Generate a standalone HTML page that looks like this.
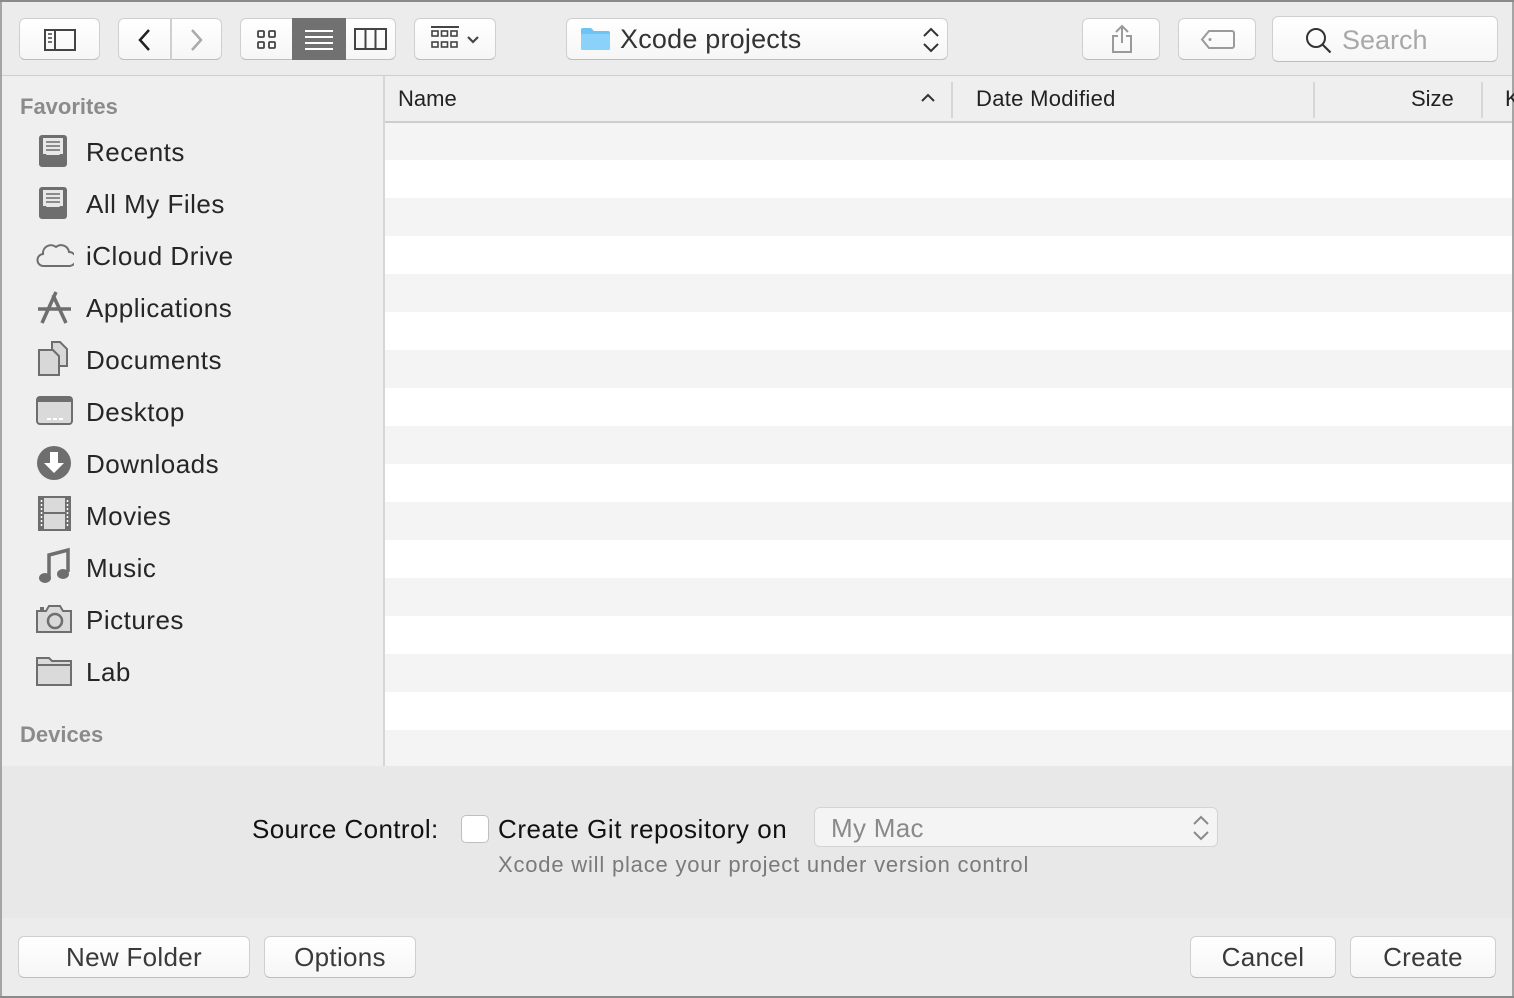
<!DOCTYPE html>
<html><head><meta charset="utf-8"><style>
*{margin:0;padding:0;box-sizing:border-box}
body{width:1514px;height:998px;overflow:hidden;background:#ececec;font-family:"Liberation Sans",sans-serif;position:relative}
.a{position:absolute}
.btn{position:absolute;background:linear-gradient(#fff,#f6f6f6);border:1px solid #cfcfcf;border-bottom-color:#bdbdbd;border-radius:6px}
.row{position:absolute;left:385px;width:1127px;height:38px}
.side{position:absolute;left:86px;font-size:26px;color:#262626;letter-spacing:0.5px}
.ic{position:absolute;left:36px}
.bl{font-size:26px;color:#3a3a3a;text-align:center;line-height:40px;letter-spacing:0.3px}
</style></head><body>
<div class="a" style="left:0;top:0;width:1514px;height:2px;background:#8a8a8a"></div>
<div class="a" style="left:0;top:2px;width:2px;height:996px;background:#a5a5a5"></div>
<div class="a" style="right:0;top:2px;width:2px;height:996px;background:#a5a5a5"></div>
<div class="a" style="left:0;top:996px;width:1514px;height:2px;background:#8a8a8a"></div>
<div class="a" style="left:2px;top:2px;width:1510px;height:73px;background:#ececec"></div>
<div class="a" style="left:2px;top:75px;width:1510px;height:1px;background:#cfcfcf"></div>
<div class="btn" style="left:19px;top:18px;width:81px;height:42px">
<svg class="a" style="left:24px;top:10px" width="32" height="22"><rect x="1" y="1" width="30" height="20" fill="none" stroke="#444" stroke-width="2"/><line x1="11" y1="1" x2="11" y2="21" stroke="#444" stroke-width="2"/><path d="M4 5h4M4 9h4M4 13h4" stroke="#444" stroke-width="1.5"/></svg></div>
<div class="btn" style="left:118px;top:18px;width:53px;height:42px;border-radius:6px 0 0 6px"><svg class="a" style="left:16px;top:8px" width="20" height="26"><path d="M14 3L5 13l9 10" fill="none" stroke="#222" stroke-width="2.5"/></svg></div>
<div class="btn" style="left:171px;top:18px;width:51px;height:42px;border-radius:0 6px 6px 0"><svg class="a" style="left:15px;top:8px" width="20" height="26"><path d="M5 3l9 10-9 10" fill="none" stroke="#aaa" stroke-width="2.5"/></svg></div>
<div class="btn" style="left:240px;top:18px;width:156px;height:42px"></div>
<svg class="a" style="left:256px;top:29px" width="22" height="22"><g fill="none" stroke="#444" stroke-width="1.8"><rect x="2" y="2" width="6" height="6" rx="1"/><rect x="13" y="2" width="6" height="6" rx="1"/><rect x="2" y="13" width="6" height="6" rx="1"/><rect x="13" y="13" width="6" height="6" rx="1"/></g></svg>
<div class="a" style="left:292px;top:18px;width:54px;height:42px;background:#717171"></div>
<svg class="a" style="left:304px;top:28px" width="30" height="22"><path d="M1 3h28M1 9h28M1 15h28M1 21h28" stroke="#fff" stroke-width="2"/></svg>
<svg class="a" style="left:354px;top:28px" width="34" height="22"><rect x="1" y="1" width="31" height="20" fill="none" stroke="#444" stroke-width="2"/><path d="M11.5 1v20M21.5 1v20" stroke="#444" stroke-width="2"/></svg>
<div class="btn" style="left:414px;top:18px;width:82px;height:42px"></div>
<svg class="a" style="left:430px;top:25px" width="56" height="28"><path d="M1 2h28" stroke="#444" stroke-width="2"/><g fill="none" stroke="#444" stroke-width="1.6"><rect x="2" y="6" width="6" height="5"/><rect x="11.5" y="6" width="6" height="5"/><rect x="21" y="6" width="6" height="5"/><rect x="2" y="17" width="6" height="5"/><rect x="11.5" y="17" width="6" height="5"/><rect x="21" y="17" width="6" height="5"/></g><path d="M38 12l5 5 5-5" fill="none" stroke="#444" stroke-width="2.2"/></svg>
<div class="btn" style="left:566px;top:18px;width:382px;height:42px"></div>
<svg class="a" style="left:580px;top:27px" width="31" height="24"><path d="M1 3a2 2 0 0 1 2-2h8l3 3h14a2 2 0 0 1 2 2v15a2 2 0 0 1-2 2H3a2 2 0 0 1-2-2z" fill="#6cc3f4"/><rect x="1" y="7" width="29" height="16" rx="1.5" fill="#8ad2fa"/></svg>
<div class="a" style="left:620px;top:24px;font-size:27px;color:#333;letter-spacing:0.2px">Xcode projects</div>
<svg class="a" style="left:921px;top:26px" width="20" height="28"><path d="M3 10l7-7 7 7M3 18l7 7 7-7" fill="none" stroke="#333" stroke-width="2"/></svg>
<div class="btn" style="left:1082px;top:18px;width:78px;height:42px"><svg class="a" style="left:27px;top:5px" width="24" height="30"><path d="M12 2v17M6 8l6-6 6 6M8 12H3v16h18V12h-5" fill="none" stroke="#9a9a9a" stroke-width="2"/></svg></div>
<div class="btn" style="left:1178px;top:18px;width:78px;height:42px"><svg class="a" style="left:21px;top:10px" width="36" height="22"><path d="M9 2h23a2 2 0 0 1 2 2v13a2 2 0 0 1-2 2H9L2 10.5z" fill="none" stroke="#9a9a9a" stroke-width="2"/><circle cx="10" cy="10.5" r="1.5" fill="#9a9a9a"/></svg></div>
<div class="btn" style="left:1272px;top:16px;width:226px;height:46px"><svg class="a" style="left:32px;top:10px" width="28" height="28"><circle cx="11" cy="11" r="9" fill="none" stroke="#333" stroke-width="2"/><path d="M17.5 17.5l8 8" stroke="#333" stroke-width="2.2"/></svg><div class="a" style="left:69px;top:8px;font-size:27px;color:#a8a8a8">Search</div></div>
<div class="a" style="left:2px;top:76px;width:381px;height:690px;background:#efefef"></div>
<div class="a" style="left:383px;top:76px;width:2px;height:690px;background:#d6d6d6"></div>
<div class="a" style="left:20px;top:94px;font-size:22px;color:#7a7a7a;font-weight:bold;opacity:.85">Favorites</div>
<div class="a" style="left:20px;top:722px;font-size:22px;color:#7a7a7a;font-weight:bold;opacity:.85">Devices</div>
<div class="side" style="top:137px">Recents</div>
<div class="side" style="top:189px">All My Files</div>
<div class="side" style="top:241px">iCloud Drive</div>
<div class="side" style="top:293px">Applications</div>
<div class="side" style="top:345px">Documents</div>
<div class="side" style="top:397px">Desktop</div>
<div class="side" style="top:449px">Downloads</div>
<div class="side" style="top:501px">Movies</div>
<div class="side" style="top:553px">Music</div>
<div class="side" style="top:605px">Pictures</div>
<div class="side" style="top:657px">Lab</div>
<svg class="ic" style="top:134px" width="38" height="34"><path d="M3 4a3 3 0 0 1 3-3h22a3 3 0 0 1 3 3v26H3z" fill="#6e6e6e"/><rect x="7" y="4" width="20" height="17" fill="#e8e8e8"/><path d="M10 8h14M10 12h14M10 16h14" stroke="#6e6e6e" stroke-width="1.5"/><path d="M3 20h7l2 3h10l2-3h7v10a3 3 0 0 1-3 3H6a3 3 0 0 1-3-3z" fill="#6e6e6e"/></svg>
<svg class="ic" style="top:186px" width="38" height="34"><path d="M3 4a3 3 0 0 1 3-3h22a3 3 0 0 1 3 3v26H3z" fill="#6e6e6e"/><rect x="7" y="4" width="20" height="17" fill="#e8e8e8"/><path d="M10 8h14M10 12h14M10 16h14" stroke="#6e6e6e" stroke-width="1.5"/><path d="M3 20h7l2 3h10l2-3h7v10a3 3 0 0 1-3 3H6a3 3 0 0 1-3-3z" fill="#6e6e6e"/></svg>
<svg class="ic" style="top:240px" width="38" height="30"><path d="M8 26a6 6 0 0 1-1-12 8 8 0 0 1 13-7 8 8 0 0 1 13 5 7 7 0 0 1 0 14z" fill="none" stroke="#6e6e6e" stroke-width="2"/></svg>
<svg class="ic" style="top:289px" width="38" height="36"><path d="M6 34L20 3M30 34L17 6M2 20h33" stroke="#6e6e6e" stroke-width="3.5" fill="none"/></svg>
<svg class="ic" style="top:341px" width="38" height="36"><path d="M3 9h14l6 6v19H3z" fill="#d8d8d8" stroke="#6e6e6e" stroke-width="2"/><path d="M16 1h8l7 7v17H23V15l-6-6h-1z" fill="#d8d8d8" stroke="#6e6e6e" stroke-width="2"/></svg>
<svg class="ic" style="top:395px" width="38" height="32"><rect x="1" y="2" width="35" height="27" rx="3" fill="#dadada" stroke="#6e6e6e" stroke-width="2"/><rect x="1" y="2" width="35" height="5" fill="#6e6e6e"/><path d="M11 24h4M17 24h4M23 24h4" stroke="#fff" stroke-width="2"/></svg>
<svg class="ic" style="top:445px" width="38" height="36"><circle cx="18" cy="18" r="17" fill="#6e6e6e"/><path d="M14 7h8v11h6l-10 10-10-10h6z" fill="#fff"/></svg>
<svg class="ic" style="top:496px" width="38" height="36"><rect x="3" y="1" width="31" height="33" fill="#dadada" stroke="#6e6e6e" stroke-width="2"/><rect x="3" y="1" width="5" height="33" fill="#6e6e6e"/><rect x="29" y="1" width="5" height="33" fill="#6e6e6e"/><path d="M8 17h21" stroke="#6e6e6e" stroke-width="2"/><path d="M5.5 4v28M31.5 4v28" stroke="#fff" stroke-width="1.5" stroke-dasharray="2 2"/></svg>
<svg class="ic" style="top:547px" width="38" height="40"><path d="M13 30V8l19-5v22" fill="none" stroke="#6e6e6e" stroke-width="3.5"/><ellipse cx="9" cy="31" rx="6" ry="5" fill="#6e6e6e"/><ellipse cx="27" cy="27" rx="6" ry="5" fill="#6e6e6e"/></svg>
<svg class="ic" style="top:603px" width="38" height="32"><path d="M1 8h9l3-5h11l3 5h8v21H1z" fill="#dadada" stroke="#6e6e6e" stroke-width="2"/><circle cx="19" cy="18" r="7" fill="none" stroke="#6e6e6e" stroke-width="2.5"/><rect x="4" y="4" width="4" height="3" fill="#6e6e6e"/></svg>
<svg class="ic" style="top:655px" width="38" height="32"><path d="M1 3h12l3 3h19v24H1z" fill="#dadada" stroke="#6e6e6e" stroke-width="2"/><path d="M1 10h34" stroke="#6e6e6e" stroke-width="2"/></svg>
<div class="a" style="left:385px;top:76px;width:1127px;height:45px;background:#efefef"></div>
<div class="a" style="left:385px;top:121px;width:1127px;height:2px;background:#cdcdcd"></div>
<div class="a" style="left:398px;top:86px;font-size:22px;color:#222">Name</div>
<svg class="a" style="left:920px;top:92px" width="16" height="12"><path d="M2 9l6-6 6 6" fill="none" stroke="#333" stroke-width="2"/></svg>
<div class="a" style="left:951px;top:82px;width:2px;height:36px;background:#d6d6d6"></div>
<div class="a" style="left:976px;top:86px;font-size:22px;color:#222;letter-spacing:0.3px">Date Modified</div>
<div class="a" style="left:1313px;top:82px;width:2px;height:36px;background:#d6d6d6"></div>
<div class="a" style="left:1411px;top:86px;font-size:22px;color:#222">Size</div>
<div class="a" style="left:1481px;top:82px;width:2px;height:36px;background:#d6d6d6"></div>
<div class="a" style="left:1505px;top:86px;font-size:22px;color:#222">K</div>
<div class="row" style="top:123px;background:#f4f4f4;height:37px"></div>
<div class="row" style="top:160px;background:#fff"></div>
<div class="row" style="top:198px;background:#f4f4f4"></div>
<div class="row" style="top:236px;background:#fff"></div>
<div class="row" style="top:274px;background:#f4f4f4"></div>
<div class="row" style="top:312px;background:#fff"></div>
<div class="row" style="top:350px;background:#f4f4f4"></div>
<div class="row" style="top:388px;background:#fff"></div>
<div class="row" style="top:426px;background:#f4f4f4"></div>
<div class="row" style="top:464px;background:#fff"></div>
<div class="row" style="top:502px;background:#f4f4f4"></div>
<div class="row" style="top:540px;background:#fff"></div>
<div class="row" style="top:578px;background:#f4f4f4"></div>
<div class="row" style="top:616px;background:#fff"></div>
<div class="row" style="top:654px;background:#f4f4f4"></div>
<div class="row" style="top:692px;background:#fff"></div>
<div class="row" style="top:730px;background:#f4f4f4;height:36px"></div>
<div class="a" style="left:2px;top:766px;width:1510px;height:152px;background:#e8e8e8"></div>
<div class="a" style="left:252px;top:814px;font-size:26px;color:#111;letter-spacing:0.4px">Source Control:</div>
<div class="a" style="left:461px;top:815px;width:28px;height:28px;background:#fff;border:1px solid #bfbfbf;border-radius:5px"></div>
<div class="a" style="left:498px;top:814px;font-size:26px;color:#111;letter-spacing:0.55px">Create Git repository on</div>
<div class="a" style="left:814px;top:807px;width:404px;height:40px;background:#f4f4f4;border:1px solid #d4d4d4;border-radius:6px"></div>
<div class="a" style="left:831px;top:813px;font-size:26px;color:#8a8a8a;letter-spacing:0.3px">My Mac</div>
<svg class="a" style="left:1191px;top:814px" width="20" height="28"><path d="M3 10l7-7 7 7M3 18l7 7 7-7" fill="none" stroke="#8a8a8a" stroke-width="2"/></svg>
<div class="a" style="left:498px;top:852px;font-size:22px;color:#7a7a7a;letter-spacing:0.8px">Xcode will place your project under version control</div>
<div class="btn bl" style="left:18px;top:936px;width:232px;height:42px">New Folder</div>
<div class="btn bl" style="left:264px;top:936px;width:152px;height:42px">Options</div>
<div class="btn bl" style="left:1190px;top:936px;width:146px;height:42px">Cancel</div>
<div class="btn bl" style="left:1350px;top:936px;width:146px;height:42px">Create</div>
</body></html>
